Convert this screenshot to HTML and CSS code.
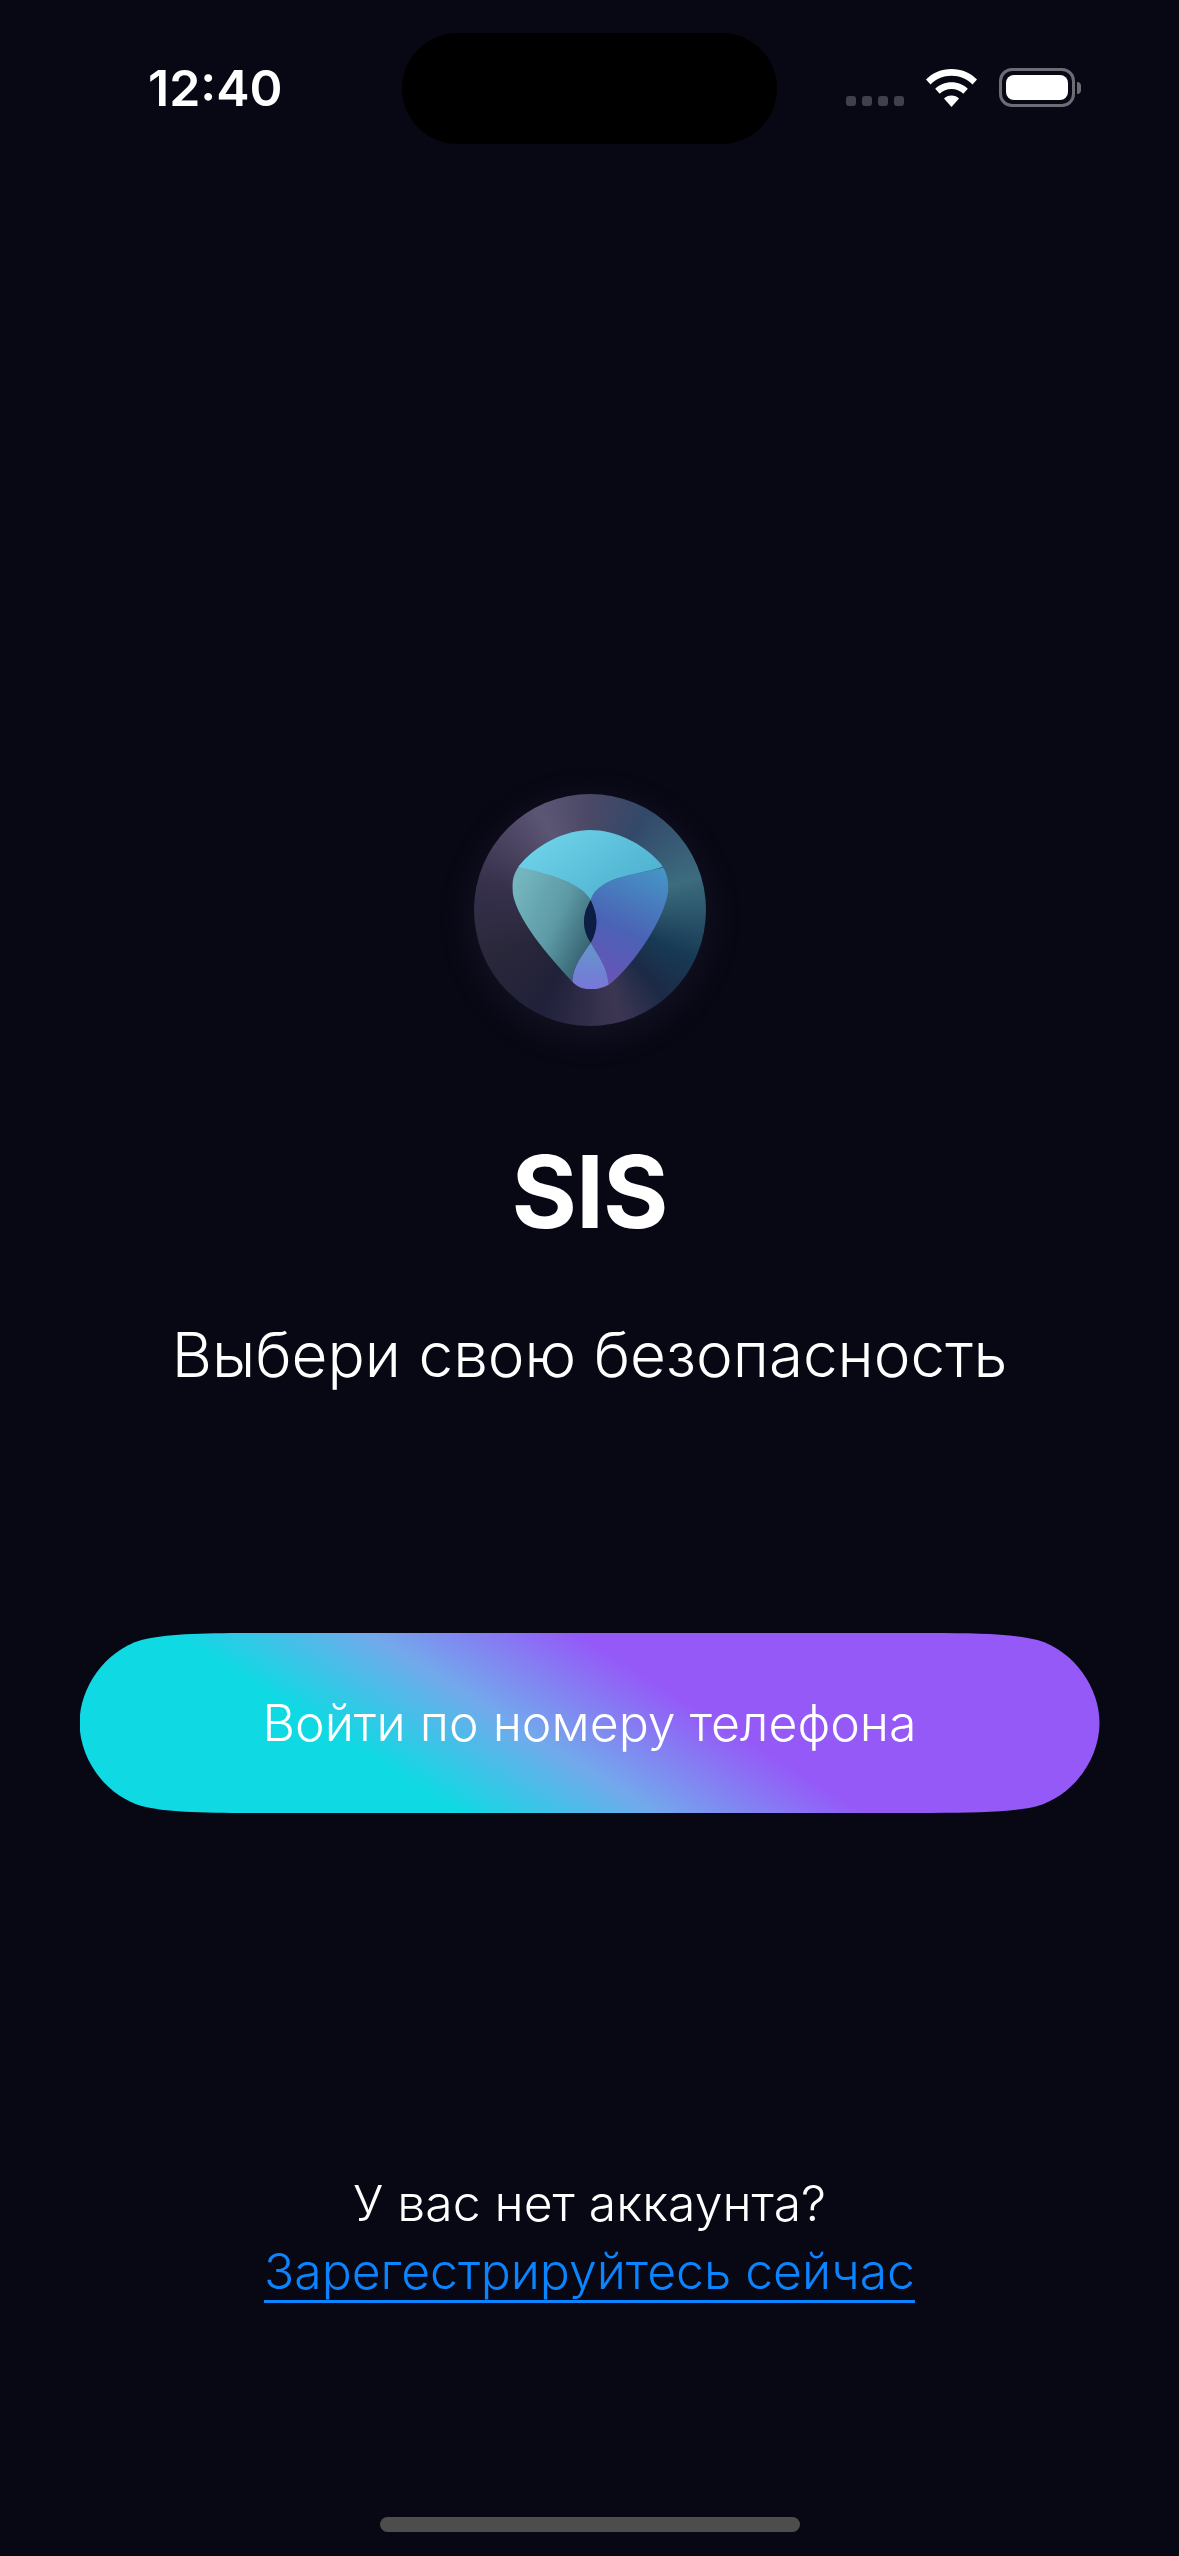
FILE: index.html
```html
<!DOCTYPE html>
<html lang="ru">
<head>
  <meta charset="UTF-8">
  <title>SIS</title>
  <link rel="stylesheet" href="styles.css">
</head>
<body>
  <div class="screen">
    <div class="status-bar">
      <div class="time">12:40</div>
      <div class="island"></div>
      <div class="status-icons">
        <div class="signal"><span></span><span></span><span></span><span></span></div>
        <svg class="wifi" viewBox="0 0 51 38" width="51" height="38">
          <path fill="#fff" d="M25.5 0C35.5 0 44.6 3.9 51 10.5L46.5 15.5C41 10 33.6 6.8 25.5 6.8S10 10 4.5 15.5L0 10.5C6.4 3.9 15.5 0 25.5 0Z"/>
          <path fill="#fff" d="M25.5 13.2C31.9 13.2 37.6 15.6 41.8 19.8L37.3 24.8C34.2 21.8 30.1 20 25.5 20S16.8 21.8 13.7 24.8L9.2 19.8C13.4 15.6 19.1 13.2 25.5 13.2Z"/>
          <path fill="#fff" d="M25.5 26.4C28.5 26.4 31.1 27.5 33 29.4L25.5 38L18 29.4C19.9 27.5 22.5 26.4 25.5 26.4Z"/>
        </svg>
        <div class="battery">
          <div class="battery-body"><div class="battery-fill"></div></div>
          <div class="battery-nub"></div>
        </div>
      </div>
    </div>

    <div class="logo">
      <svg viewBox="107 104 696 696" width="232" height="232">
        <defs>
          <clipPath id="blobShape">
            <path d="M455 212C530 212 610 250 662 307C680 327 690 352 690 385C690 450 610 590 522 668C505 683 480 690 457 690C435 690 415 683 400 665C340 600 222 470 222 385C222 355 230 333 250 310C300 255 380 212 455 212Z"/>
          </clipPath>
          <linearGradient id="blobTop" x1="0" y1="0" x2="1" y2="0.6">
            <stop offset="0" stop-color="#78dcef"/>
            <stop offset="1" stop-color="#4cb0d0"/>
          </linearGradient>
          <linearGradient id="blobLeft" x1="0.1" y1="0.2" x2="0.9" y2="0.8">
            <stop offset="0" stop-color="#74b6bf"/>
            <stop offset="0.55" stop-color="#5d9aa6"/>
            <stop offset="1" stop-color="#35606f"/>
          </linearGradient>
          <linearGradient id="blobRight" x1="0.7" y1="0" x2="0.4" y2="1">
            <stop offset="0" stop-color="#4595c6"/>
            <stop offset="0.55" stop-color="#4b62b5"/>
            <stop offset="1" stop-color="#6c52b8"/>
          </linearGradient>
          <linearGradient id="blobBottom" x1="0.5" y1="0" x2="0.5" y2="1">
            <stop offset="0" stop-color="#6497c9"/>
            <stop offset="1" stop-color="#7b72dc"/>
          </linearGradient>
        </defs>
        <g clip-path="url(#blobShape)">
          <path fill="url(#blobLeft)" d="M200 300C320 340 430 370 457 422C425 470 440 520 457 550C430 590 405 620 402 665L400 710L200 500Z"/>
          <path fill="url(#blobRight)" d="M710 315C620 345 480 345 457 422C480 470 480 510 457 550C480 590 505 620 510 668L520 710L710 500Z"/>
          <path fill="url(#blobTop)" d="M200 300L240 322C320 340 430 370 457 422C480 345 620 345 672 322L710 315L710 190L200 190Z"/>
          <path fill="#0c1e44" d="M457 422C430 470 430 510 457 550C480 510 480 470 457 422Z"/>
          <path fill="url(#blobBottom)" d="M457 550C430 590 405 620 402 665L400 710L520 710L510 668C505 620 480 590 457 550Z"/>
        </g>
      </svg>
    </div>

    <h1 class="title">SIS</h1>
    <p class="subtitle">Выбери свою безопасность</p>

    <button class="login-btn">Войти по номеру телефона</button>

    <div class="signup">
      <div>У вас нет аккаунта?</div>
      <a class="signup-link" href="#">Зарегестрируйтесь сейчас</a>
    </div>

    <div class="home-indicator"></div>
  </div>
</body>
</html>
```
FILE: styles.css
```css
* {
  box-sizing: border-box;
}
body {
  margin: 0;
  background-color: #080814;
  font-family: Inter, "Noto Sans", sans-serif;
  color: #fff;
}
.screen {
  width: 1179px;
  height: 2556px;
  overflow: hidden;
  display: flex;
  flex-direction: column;
  align-items: center;
}
.status-bar {
  width: 100%;
  height: 144px;
  padding-top: 33px;
  display: grid;
  grid-template-columns: 402px 375px 1fr;
}
.time {
  padding-left: 148px;
  font-size: 50px;
  font-weight: 600;
  line-height: 111px;
}
.island {
  height: 111px;
  background-color: #000;
  border-radius: 56px;
}
.status-icons {
  display: flex;
  align-items: flex-start;
  padding: 36px 0 0 69px;
}
.signal {
  display: flex;
  gap: 6px;
  margin-top: 27px;
}
.signal span {
  width: 10px;
  height: 10px;
  border-radius: 3px;
  background-color: #403f4a;
}
.wifi {
  margin-left: 22px;
}
.battery {
  display: flex;
  align-items: center;
  margin-left: 22px;
  margin-top: -1px;
}
.battery-body {
  width: 76px;
  height: 39px;
  padding: 4px;
  border: 3px solid #6d6c75;
  border-radius: 13px;
}
.battery-fill {
  height: 100%;
  background-color: #fff;
  border-radius: 8px;
}
.battery-nub {
  width: 4px;
  height: 12px;
  margin-left: 2px;
  background-color: #6d6c75;
  border-radius: 0 6px 6px 0;
}
.logo {
  width: 232px;
  height: 232px;
  margin-top: 650px;
  border-radius: 50%;
  display: flex;
  background: conic-gradient(#4a4866 0deg, #33496a 30deg, #3c6c7e 73deg, #173a54 115deg, #1c2a46 140deg, #3d3653 165deg, #20213a 205deg, #282639 240deg, #37314c 285deg, #5c5675 333deg, #4a4866 360deg);
  box-shadow: 0 8px 40px rgba(120, 110, 170, 0.12);
}
.title {
  margin: 105px 0 0;
  font-size: 100px;
  font-weight: 700;
  letter-spacing: -1px;
  line-height: 121px;
}
.subtitle {
  margin: 64px 0 0;
  font-size: 62px;
  font-weight: 350;
  line-height: 78px;
}
.login-btn {
  width: 1020px;
  height: 180px;
  margin-top: 239px;
  border: none;
  clip-path: path("M170 0C120 0 85 1 62 7C25 18 0 55 0 90C0 125 25 162 62 173C85 179 120 180 170 180H850C900 180 935 179 958 173C995 162 1020 125 1020 90C1020 55 995 18 958 7C935 1 900 0 850 0Z");
  background: linear-gradient(32deg, #0fd9e3 29%, #72a9ec 44%, #9559f8 60%);
  color: #fff;
  font-family: inherit;
  font-size: 50px;
  font-weight: 350;
}
.signup {
  margin-top: 356px;
  font-size: 49.9px;
  font-weight: 350;
  line-height: 68px;
  text-align: center;
}
.signup-link {
  color: #0a84ff;
  text-decoration: underline;
  text-underline-offset: 11px;
  text-decoration-thickness: 3px;
}
.home-indicator {
  width: 420px;
  height: 15px;
  margin-top: auto;
  margin-bottom: 24px;
  background-color: #4d4d4d;
  border-radius: 8px;
}
```
